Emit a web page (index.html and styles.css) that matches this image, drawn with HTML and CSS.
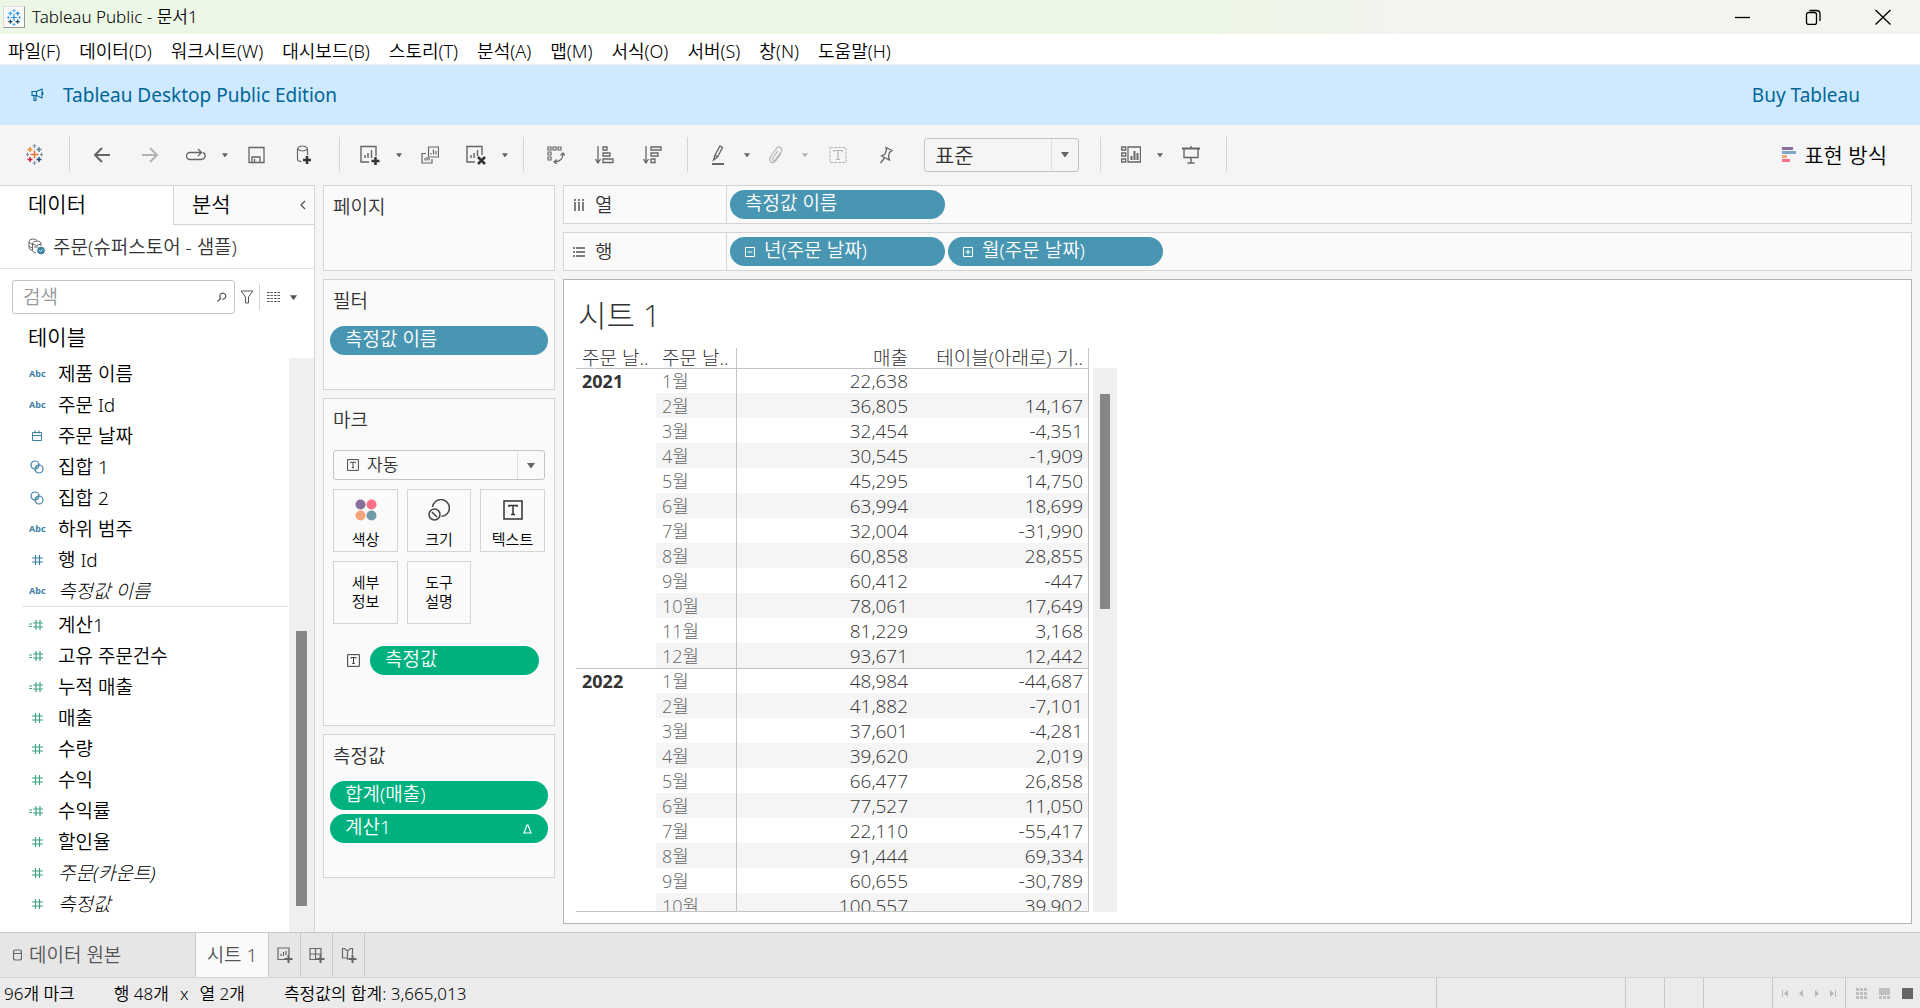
FILE: index.html
```html
<!DOCTYPE html>
<html lang="ko">
<head>
<meta charset="utf-8">
<title>Tableau Public - 문서1</title>
<link rel="stylesheet" href="styles.css">
</head>
<body>
<svg class="defs" aria-hidden="true">
  <symbol id="hash" viewBox="0 0 16 12"><path d="M6.500 1v10M10.500 1v10M3 4h11M3 8h11" fill="none" stroke="currentColor" stroke-width="1.200"/></symbol>
  <symbol id="calc" viewBox="0 0 16 12"><path d="M7 1v10M11 1v10M4 4h10M4 8h10M0 5h3M0 7.500h3" fill="none" stroke="currentColor" stroke-width="1.200"/></symbol>
  <symbol id="date" viewBox="0 0 12 12"><path d="M1.500 2.500h9v8h-9zM1.500 5.500h9M4 .5v3M8 .5v3" fill="none" stroke="currentColor"/></symbol>
  <symbol id="set" viewBox="0 0 14 14"><circle cx="5" cy="5" r="4" fill="none" stroke="currentColor" stroke-width="1.200"/><circle cx="9" cy="9" r="4" fill="none" stroke="currentColor" stroke-width="1.200"/><path d="M5 9a4 4 0 0 1 4-4a4 4 0 0 1-4 4z" fill="currentColor" opacity=".5"/></symbol>
  <symbol id="caret" viewBox="0 0 8 5"><path d="M0 0h8L4.500 5h-1z" fill="currentColor"/></symbol>
  <symbol id="textmark" viewBox="0 0 20 20"><path d="M1 1h18v18H1zM6 7V5.500h8V7M10 5.500v9M8 14.500h4" fill="none" stroke="currentColor" stroke-width="1.500"/></symbol>
  <symbol id="spark" viewBox="0 0 17 21">
    <path d="M8.500 6.500v8M4.500 10.500h8" class="c1"/><path d="M4 3v5M1.500 5.500h5" class="c2"/><path d="M13 3v5M10.500 5.500h5" class="c3"/><path d="M4 13v5M1.500 15.500h5" class="c4"/><path d="M13 13v5M10.500 15.500h5" class="c5"/><path d="M8.500 0v4M6.500 2h4M8.500 17v4M6.500 19h4M1.500 8.500v4M0 10.500h3M15.500 8.500v4M14 10.500h3" class="c6"/>
  </symbol>
</svg>

<div class="app">
  <header class="titlebar">
    <span class="app-icon"><svg class="mono" width="14" height="17" viewBox="0 0 17 21"><use href="#spark" width="17" height="21"/></svg></span>
    <h1 class="app-title">Tableau Public - 문서1</h1>
    <button class="win-btn" aria-label="최소화"><svg width="16" height="16"><path d="M0 8.500h15"/></svg></button>
    <button class="win-btn" aria-label="이전 크기로"><svg width="16" height="16"><path d="M3.500 3.500h6a2 2 0 0 1 2 2v8a2 2 0 0 1-2 2h-6a2 2 0 0 1-2-2v-8a2 2 0 0 1 2-2zM4.500 1.500h7q3.500 0 3.500 3.500v7"/></svg></button>
    <button class="win-btn" aria-label="닫기"><svg width="16" height="16"><path d="M.5 1l15 14.500M15.500 1l-15 14.500"/></svg></button>
  </header>

  <nav class="menubar" aria-label="메뉴">
    <button>파일(F)</button><button>데이터(D)</button><button>워크시트(W)</button><button>대시보드(B)</button><button>스토리(T)</button><button>분석(A)</button><button>맵(M)</button><button>서식(O)</button><button>서버(S)</button><button>창(N)</button><button>도움말(H)</button>
  </nav>

  <div class="banner">
    <svg width="14" height="14" viewBox="0 0 14 14"><path d="M1 3.500h4.500L11 1v9L5.500 7.500H1zM3 7.500v5h2v-5M5.500 3.500v4M11 4q2 1.500 0 3" fill="none" stroke="currentColor" stroke-width="1.100"/></svg>
    <span>Tableau Desktop Public Edition</span>
    <a href="#buy">Buy Tableau</a>
  </div>

  <div class="toolbar">
    <button class="tool logo" aria-label="시작 페이지"><svg width="17" height="21" viewBox="0 0 17 21"><use href="#spark" width="17" height="21"/></svg></button>
    <span class="sep"></span>
    <button class="tool" aria-label="실행 취소"><svg width="18" height="18"><path d="M17 9H2M9 2L2 9l7 7" stroke-width="2"/></svg></button>
    <button class="tool off" aria-label="다시 실행"><svg width="18" height="18"><path d="M1 9h15M9 2l7 7-7 7" stroke-width="2"/></svg></button>
    <button class="tool menu" aria-label="다시 재생"><svg width="20" height="14"><path d="M5 11.500H4a3 3 0 0 1 0-7h11M12 1l3.500 3.500L12 8M17 4.500q2.500 1 2 4t-4 3H5" stroke-width="1.400"/></svg></button>
    <button class="drop" aria-label="다시 재생 옵션"><svg width="6" height="4"><use href="#caret"/></svg></button>
    <button class="tool" aria-label="저장"><svg width="17" height="18"><path d="M1 1.500h15v15H1zM4 16v-5h8v5M6.500 13v3" stroke-width="1.300"/></svg></button>
    <button class="tool" aria-label="새 데이터 원본"><svg width="16" height="20"><path d="M1.500 4v10q0 2.500 4 2.500M11.500 4v6M1.500 4q5 4 10 0q-1-3-5-3t-5 3" stroke-width="1.200"/><path d="M11 11v8M7 15h8" class="plus"/></svg></button>
    <span class="sep"></span>
    <button class="tool menu" aria-label="새 워크시트"><svg width="20" height="20"><path d="M9 17H1V1.500h15V11M5 13v-3M8 13V8M11.500 13V5" stroke-width="1.400"/><path d="M15.500 12v8M11.500 16h8" class="plus"/></svg></button>
    <button class="drop" aria-label="새 워크시트 옵션"><svg width="6" height="4"><use href="#caret"/></svg></button>
    <button class="tool" aria-label="복제"><svg width="18" height="18"><path d="M7.500 1h10v10h-10zM10 8.500V7M12.500 8.500v-5M15 8.500V5M5 7.500H1V17h10v-4M4 14.500V12M6 14.500V11M8 14.500V12" stroke-width="1.200"/></svg></button>
    <button class="tool menu" aria-label="시트 지우기"><svg width="20" height="20"><path d="M9 17H1V1.500h15V10M5 13v-3M8 13V8M11.500 11V5" stroke-width="1.400"/><path d="M12 12l7 7M19 12l-7 7" class="plus"/></svg></button>
    <button class="drop" aria-label="시트 지우기 옵션"><svg width="6" height="4"><use href="#caret"/></svg></button>
    <span class="sep"></span>
    <button class="tool" aria-label="행과 열 바꾸기"><svg width="18" height="18"><path d="M1 1h3v3H1zM6 1h3v3H6zM11 1h3v3h-3zM1 6h3v3H1zM1 11h3v3H1zM16 8q0 7-8 8M13.500 9.500L16 7l2 2.500M10 13.500L7 16l3 2" stroke-width="1.200"/></svg></button>
    <button class="tool" aria-label="오름차순 정렬"><svg width="19" height="18"><path d="M3 0v16M.5 13L3 17l2.500-4M8 1h4v3H8zM8 7h7v3H8zM8 13h10v3.500H8z" stroke-width="1.300"/></svg></button>
    <button class="tool" aria-label="내림차순 정렬"><svg width="19" height="18"><path d="M3 0v16M.5 13L3 17l2.500-4M8 1h10v3H8zM8 7h7v3H8zM8 13h4v3.500H8z" stroke-width="1.300"/></svg></button>
    <span class="sep"></span>
    <button class="tool menu" aria-label="강조 표시"><svg width="14" height="20"><path d="M2.500 15l1.500-5 5-9 2.500 1.500-5 9.500zM4 10l2.500 2" stroke-width="1.300"/><path d="M1 19h12" stroke-width="2"/></svg></button>
    <button class="drop" aria-label="강조 표시 옵션"><svg width="6" height="4"><use href="#caret"/></svg></button>
    <button class="tool menu off" aria-label="그룹 구성원"><svg width="15" height="18"><path d="M9 5l-5 7q-1 2 .500 2.500T7 13l5-7q2-3-.5-4.500T7 3L2 10q-2.500 4 0 6t5-1.500l5-7" stroke-width="1.200"/></svg></button>
    <button class="drop off" aria-label="그룹 옵션"><svg width="6" height="4"><use href="#caret"/></svg></button>
    <button class="tool label off" aria-label="마크 레이블 표시"><svg width="18" height="18"><path d="M1 1.500h16v15H1z" stroke-dasharray="3 1"/><path d="M5 6V4.500h8V6M9 4.500v9M7 13.500h4" stroke-width="1.200"/></svg></button>
    <button class="tool pin" aria-label="축 고정"><svg width="14" height="18"><path d="M7 1.500l6 3-2.500 2-1 3.500 1 4-8-4L6 8l1.500-4zM5.500 12L1.500 17" stroke-width="1.300"/></svg></button>
    <span class="combo fit"><select aria-label="맞춤"><option>표준</option></select><svg width="8" height="5"><use href="#caret"/></svg></span>
    <span class="sep fit-sep"></span>
    <button class="tool menu" aria-label="카드 표시/숨기기"><svg width="20" height="17"><path d="M.7 1h4v3h-4zM.7 7h4v3h-4zM.7 13h4v3h-4zM7 1h12.500v15H7z" stroke-width="1.300"/><path d="M10.500 14v-4M13.500 14V5M16.500 14V7" stroke-width="2"/></svg></button>
    <button class="drop" aria-label="카드 옵션"><svg width="6" height="4"><use href="#caret"/></svg></button>
    <button class="tool" aria-label="프레젠테이션 모드"><svg width="18" height="18"><path d="M0 2.500h18" stroke-width="2"/><path d="M9 0v2M2 3v8.500h14V3M9 12v5M5.500 17h7" stroke-width="1.400"/></svg></button>
    <span class="sep"></span>
    <button class="showme"><svg width="14" height="15"><path d="M0 1.500h11" stroke="#86709a"/><path d="M0 5.500h14" stroke="#80a4d0"/><path d="M0 9.500h5" stroke="#f4a57a"/><path d="M0 13.500h8" stroke="#fb7084"/></svg>표현 방식</button>
  </div>

  <main class="work">
    <aside class="datapane">
      <div class="panetabs">
        <button class="ptab on">데이터</button>
        <button class="ptab">분석</button>
        <button class="fold" aria-label="창 축소"><svg width="6" height="10"><path d="M5 1L1 5l4 4" fill="none" stroke="#555" stroke-width="1.300"/></svg></button>
      </div>
      <button class="source"><svg width="17" height="17" viewBox="0 0 17 17"><path d="M5 12.500q-4-.5-4-2.500V3.500Q1 1 5 1q3 0 4 1.500M1 4q1 2 3 2M1 8q1 1.500 3 1.500M13 8V5Q12 3 9 3T4.500 5v7.500Q5 14.500 8 15M4.500 6q4 3 8.500 0M6 9h4" fill="none" stroke="#666"/><circle cx="13" cy="12.500" r="3.800" fill="#3d81a3"/><path d="M11.500 12.500l1 1 2-2" fill="none" stroke="#fff"/></svg>주문(슈퍼스토어 - 샘플)</button>
      <div class="searchrow">
        <label class="search"><input type="text" placeholder="검색" aria-label="필드 검색"><svg width="10" height="10"><path d="M4 6.500a3 3 0 1 1 1 .5M3.500 6.500L.5 9.500" fill="none" stroke="#555" stroke-width="1.200"/></svg></label>
        <button class="icon-btn" aria-label="필터"><svg width="14" height="14"><path d="M1 1h12L8.500 7v6h-3V7z" fill="none" stroke="#555"/></svg></button>
        <button class="icon-btn view" aria-label="보기"><svg width="13" height="10"><path d="M0 .5h13M0 3.500h13M0 6.500h13M0 9.500h13" stroke="#555" stroke-dasharray="2.500 1"/></svg><svg width="7" height="5"><use href="#caret"/></svg></button>
      </div>
      <h2 class="tables">테이블</h2>
      <div class="fieldarea">
        <div class="fields">
          <ul class="dims">
            <li><b>Abc</b>제품 이름</li>
            <li><b>Abc</b>주문 Id</li>
            <li><svg width="16" height="12"><use href="#date"/></svg>주문 날짜</li>
            <li><svg width="16" height="14"><use href="#set"/></svg>집합 1</li>
            <li><svg width="16" height="14"><use href="#set"/></svg>집합 2</li>
            <li><b>Abc</b>하위 범주</li>
            <li><svg width="16" height="12"><use href="#hash"/></svg>행 Id</li>
            <li class="gen"><b>Abc</b>측정값 이름</li>
          </ul>
          <ul class="meas">
            <li><svg width="16" height="12"><use href="#calc"/></svg>계산1</li>
            <li><svg width="16" height="12"><use href="#calc"/></svg>고유 주문건수</li>
            <li><svg width="16" height="12"><use href="#calc"/></svg>누적 매출</li>
            <li><svg width="16" height="12"><use href="#hash"/></svg>매출</li>
            <li><svg width="16" height="12"><use href="#hash"/></svg>수량</li>
            <li><svg width="16" height="12"><use href="#hash"/></svg>수익</li>
            <li><svg width="16" height="12"><use href="#calc"/></svg>수익률</li>
            <li><svg width="16" height="12"><use href="#hash"/></svg>할인율</li>
            <li class="gen"><svg width="16" height="12"><use href="#hash"/></svg>주문(카운트)</li>
            <li class="gen"><svg width="16" height="12"><use href="#hash"/></svg>측정값</li>
          </ul>
        </div>
        <div class="track field-track"><div class="thumb"></div></div>
      </div>
    </aside>

    <section class="cards">
      <div class="card pages"><h2>페이지</h2></div>
      <div class="card filters"><h2>필터</h2><button class="pill blue">측정값 이름</button></div>
      <div class="card marks">
        <h2>마크</h2>
        <span class="combo marktype"><svg class="lead" width="12" height="12"><use href="#textmark"/></svg><select aria-label="마크 유형"><option>자동</option></select><svg width="8" height="5"><use href="#caret"/></svg></span>
        <div class="markgrid">
          <button><svg width="22" height="22"><circle cx="5.500" cy="5.500" r="5" fill="#86709a"/><circle cx="16.500" cy="5.500" r="5" fill="#fb7084"/><circle cx="5.500" cy="16.500" r="5" fill="#f4a57a"/><circle cx="16.500" cy="16.500" r="5" fill="#6f9aa8"/></svg>색상</button>
          <button><svg width="22" height="22"><path d="M4.500 8a8.500 8.500 0 1 1 9 9.500" /><circle cx="6.500" cy="15.500" r="5.500"/><path d="M4 13l5 5"/></svg>크기</button>
          <button><svg width="20" height="22"><use href="#textmark"/></svg>텍스트</button>
          <button>세부<br>정보</button>
          <button>도구<br>설명</button>
        </div>
        <div class="encoding"><svg width="13" height="13"><use href="#textmark"/></svg><button class="pill green">측정값</button></div>
      </div>
      <div class="card values"><h2>측정값</h2><button class="pill green">합계(매출)</button><button class="pill green">계산1<svg width="9" height="10"><path d="M4 1h1l3 8H1z" fill="none" stroke="#fff" stroke-width="1.200"/></svg></button></div>
    </section>

    <section class="sheet">
      <div class="shelf">
        <h2><svg width="12" height="12"><path d="M2 0v2M6 0v2M10 0v2M2 3v9M6 3v9M10 3v9" stroke="#555" stroke-width="1.500"/></svg>열</h2>
        <button class="pill blue">측정값 이름</button>
      </div>
      <div class="shelf">
        <h2><svg width="12" height="12"><path d="M0 2h2M0 6h2M0 10h2M3 2h9M3 6h9M3 10h9" stroke="#555" stroke-width="1.500"/></svg>행</h2>
        <button class="pill blue"><svg width="10" height="10"><path d="M.5.5h9v9h-9zM2.500 5h5" fill="none" stroke="#fff"/></svg>년(주문 날짜)</button>
        <button class="pill blue"><svg width="10" height="10"><path d="M.5.5h9v9h-9zM2.500 5h5M5 2.500v5" fill="none" stroke="#fff"/></svg>월(주문 날짜)</button>
      </div>
      <div class="canvas">
        <h2>시트 1</h2>
        <div class="viz">
          <div class="tablewrap">
          <table>
            <colgroup><col class="cy"><col class="cm"><col><col></colgroup>
            <thead><tr><th>주문 날..</th><th>주문 날..</th><th class="num">매출</th><th class="num">테이블(아래로) 기..</th></tr></thead>
            <tbody>
              <tr><th rowspan="12">2021</th><th>1월</th><td>22,638</td><td></td></tr>
              <tr><th>2월</th><td>36,805</td><td>14,167</td></tr>
              <tr><th>3월</th><td>32,454</td><td>-4,351</td></tr>
              <tr><th>4월</th><td>30,545</td><td>-1,909</td></tr>
              <tr><th>5월</th><td>45,295</td><td>14,750</td></tr>
              <tr><th>6월</th><td>63,994</td><td>18,699</td></tr>
              <tr><th>7월</th><td>32,004</td><td>-31,990</td></tr>
              <tr><th>8월</th><td>60,858</td><td>28,855</td></tr>
              <tr><th>9월</th><td>60,412</td><td>-447</td></tr>
              <tr><th>10월</th><td>78,061</td><td>17,649</td></tr>
              <tr><th>11월</th><td>81,229</td><td>3,168</td></tr>
              <tr><th>12월</th><td>93,671</td><td>12,442</td></tr>
            </tbody>
            <tbody>
              <tr><th rowspan="10">2022</th><th>1월</th><td>48,984</td><td>-44,687</td></tr>
              <tr><th>2월</th><td>41,882</td><td>-7,101</td></tr>
              <tr><th>3월</th><td>37,601</td><td>-4,281</td></tr>
              <tr><th>4월</th><td>39,620</td><td>2,019</td></tr>
              <tr><th>5월</th><td>66,477</td><td>26,858</td></tr>
              <tr><th>6월</th><td>77,527</td><td>11,050</td></tr>
              <tr><th>7월</th><td>22,110</td><td>-55,417</td></tr>
              <tr><th>8월</th><td>91,444</td><td>69,334</td></tr>
              <tr><th>9월</th><td>60,655</td><td>-30,789</td></tr>
              <tr><th>10월</th><td>100,557</td><td>39,902</td></tr>
            </tbody>
          </table>
          </div>
          <div class="track viz-track"><div class="thumb"></div></div>
        </div>
      </div>
    </section>
  </main>

  <nav class="sheettabs" aria-label="시트">
    <button class="src"><svg width="9" height="12"><path d="M.5 3v6q0 2 2 2h4q2 0 2-2V3q0-2-2-2h-4q-2 0-2 2t2 1.500h4q2 0 2-1.500"/></svg>데이터 원본</button>
    <button class="on">시트 1</button>
    <button class="add" aria-label="새 워크시트"><svg width="16" height="16"><path d="M8 12.500H1V1h11v7M4 9V7M6.500 9V5M9 8V4"/><path d="M11.500 8v8M7.500 12h8" stroke-width="2"/></svg></button>
    <button class="add" aria-label="새 대시보드"><svg width="16" height="16"><path d="M8 12.500H1V1.500h11v7M1 7h11M6.500 1v11"/><path d="M11.500 8v8M7.500 12h8" stroke-width="2"/></svg></button>
    <button class="add" aria-label="새 스토리"><svg width="16" height="16"><path d="M7 12.500L5.500 11H1.500V1.500h2L6.500 4l3-2.500h2v6M6.500 4v7"/><path d="M11.500 8v8M7.500 12h8" stroke-width="2"/></svg></button>
  </nav>

  <footer class="status">
    <p><span>96개 마크</span><span>행 48개</span><span>x</span><span>열 2개</span><span>측정값의 합계: 3,665,013</span></p>
    <i class="w189"></i><i class="w39"></i><i class="w39"></i><i class="w69"></i>
    <div class="nav">
      <button aria-label="처음"><svg width="7" height="7"><path d="M0 0h1v7H0zM6 0v7L2 3.500z"/></svg></button><button aria-label="이전"><svg width="7" height="7"><path d="M5 0v7L1 3.500z"/></svg></button><button aria-label="다음"><svg width="7" height="7"><path d="M2 0v7l4-3.500z"/></svg></button><button aria-label="마지막"><svg width="7" height="7"><path d="M1 0v7l4-3.500zM6 0h1v7H6z"/></svg></button>
    </div>
    <div class="views">
      <button aria-label="시트 정렬기"><svg width="11" height="11"><path d="M0 0h3v3H0zM4 0h3v3H4zM8 0h3v3H8zM0 4h3v3H0zM4 4h3v3H4zM8 4h3v3H8zM0 8h3v3H0zM4 8h3v3H4zM8 8h3v3H8z"/></svg></button><button aria-label="필름 보기"><svg width="11" height="11"><path d="M0 0h11v7H0zM0 8h3v3H0zM4 8h3v3H4zM8 8h3v3H8z"/></svg></button><button class="on" aria-label="탭 표시"><svg width="11" height="11"><path d="M0 0h11v11H0z"/></svg></button>
    </div>
  </footer>
</div>
</body>
</html>
```

FILE: styles.css
```css
* { box-sizing: border-box; }

body, h1, h2, p, ul { margin: 0; padding: 0; }

body {
  font-family: "Noto Sans", "Noto Sans CJK KR", sans-serif;
  font-size: 19px;
  line-height: 24px;
  font-weight: 350;
  color: #000;
  background: #f5f5f5;
}

h1, h2 { font-size: inherit; font-weight: inherit; }
ul { list-style: none; }
svg { flex: none; display: block; }
.defs { display: none; }

button, input, select {
  font: inherit;
  color: inherit;
  background: none;
  border: 0;
  padding: 0;
  margin: 0;
  border-radius: 0;
  white-space: nowrap;
}

.app { display: flex; flex-direction: column; height: 100vh; min-width: 1300px; }

/* title bar */
.titlebar {
  display: flex;
  align-items: center;
  flex: none;
  height: 34px;
  padding: 0 2px 0 3px;
  background: linear-gradient(90deg, #ecf7e5 62%, #f3f4ef 74%);
}
.app-icon {
  display: grid;
  place-items: center;
  width: 22px;
  height: 22px;
  background: #f8f8f8;
  border: 1px solid #ddd;
  border-right-color: #999;
  border-bottom-color: #999;
}
.app-title { flex: 1; padding-left: 7px; font-size: 17px; }
.win-btn { display: grid; place-items: center; width: 70px; height: 32px; }
.win-btn svg { fill: none; stroke: #000; stroke-width: 1.3; }

#spark path { fill: none; stroke-width: 1.5; }
#spark .c1 { stroke: #e8762d; }
#spark .c2 { stroke: #eb9129; }
#spark .c3 { stroke: #59879b; }
#spark .c4 { stroke: #c72037; }
#spark .c5 { stroke: #1f447e; }
#spark .c6 { stroke: #7b8fa8; stroke-width: 1; }
.mono { filter: grayscale(1) brightness(.8) sepia(1) hue-rotate(165deg) saturate(4); }

/* menu bar */
.menubar {
  display: flex;
  flex: none;
  align-items: center;
  gap: 19px;
  height: 31px;
  padding: 3px 0 0 8px;
  font-size: 18px;
  background: #fff;
  border-bottom: 1px solid #eee;
}

/* banner */
.banner {
  display: flex;
  flex: none;
  align-items: center;
  gap: 18px;
  height: 60px;
  padding: 0 60px 0 31px;
  font-weight: 400;
  color: #006699;
  background: #cfe9ff;
}
.banner a { margin-left: auto; color: inherit; text-decoration: none; }

/* toolbar */
.toolbar { display: flex; flex: none; align-items: center; height: 60px; padding: 0 33px 1px 16px; }
.tool, .drop { display: grid; place-items: center; height: 36px; width: 48px; color: #666; }
.tool.menu { width: 44px; }
.tool.label { width: 52px; }
.tool.pin { width: 44px; }
.tool.logo { width: 36px; margin-right: 6px; }
.drop { width: 14px; }
.drop.off, .tool.off { color: #b4b4b4; }
.tool svg { fill: none; stroke: currentColor; }
.tool .plus { stroke: #333; stroke-width: 2.5; }
.sep { width: 1px; height: 35px; margin: 0 8px 0 11px; background: #d4d4d4; }
.fit-sep { margin-left: 21px; }

.combo { display: flex; position: relative; align-items: center; border: 1px solid #c4c4c4; border-radius: 3px; color: #333; }
.combo select { appearance: none; flex: 1; align-self: stretch; }
.combo svg:last-child { position: absolute; right: 9px; color: #666; pointer-events: none; }
.combo::after { content: ""; position: absolute; top: 0; bottom: 0; right: 26px; width: 1px; background: #e0e0e0; }
.fit { width: 155px; height: 34px; margin-left: 16px; font-size: 21px; }
.fit select { padding-left: 10px; }
.showme { display: flex; align-items: center; gap: 8px; margin-left: auto; font-size: 21px; }
.showme path { stroke-width: 3; }

/* workspace columns */
.work { display: flex; flex: 1; min-height: 0; }

.datapane {
  display: flex;
  flex-direction: column;
  flex: none;
  width: 315px;
  background: #fff;
  border-top: 1px solid #d4d4d4;
  border-right: 1px solid #d4d4d4;
}
.panetabs { display: flex; flex: none; height: 39px; font-size: 21px; }
.ptab { flex: 1; padding: 0 0 3px 18px; text-align: left; background: #fafafa; border-bottom: 1px solid #d4d4d4; }
.ptab.on { flex: none; width: 174px; padding-left: 28px; background: #fff; border-right: 1px solid #d4d4d4; border-bottom: 0; }
.fold { display: grid; place-items: center; width: 23px; background: #fafafa; border-bottom: 1px solid #d4d4d4; }
.source { display: flex; flex: none; align-items: center; gap: 8px; height: 44px; padding: 0 28px; color: #333; border-bottom: 1px solid #e2e2e2; }
.searchrow { display: flex; flex: none; align-items: center; height: 34px; margin: 11px 12px 0; }
.search { display: flex; align-items: center; width: 223px; height: 34px; padding: 0 7px 0 10px; border: 1px solid #c4c4c4; border-radius: 3px; }
.search input { flex: 1; min-width: 0; outline: 0; }
.search input::placeholder { color: #999; opacity: 1; }
.icon-btn { display: flex; align-items: center; justify-content: center; width: 25px; height: 26px; color: #555; }
.icon-btn.view { gap: 10px; width: 46px; padding-left: 2px; border-left: 1px solid #d4d4d4; }
.tables { flex: none; height: 44px; padding: 11px 0 0 28px; font-size: 21px; }
.fieldarea { display: flex; flex: 1; min-height: 0; }
.fields { flex: 1; overflow: hidden; }
.fields li { display: flex; align-items: center; gap: 12px; height: 31px; padding-left: 29px; }
.fields b { flex: none; width: 17px; font-size: 9px; font-weight: 700; font-style: normal; }
.fields b, .dims svg { color: #3d81a3; }
.fields li:has(svg) { gap: 13px; }
.fields .gen { font-style: italic; font-weight: 300; }
.dims { padding-bottom: 1px; }
.meas { padding-top: 1px; }
.dims::after { content: ""; display: block; height: 1px; margin: 0 1px 0 22px; background: #ddd; }
.meas svg { color: #3ea482; }

.track { flex: none; background: #efefef; }
.thumb { background: #868686; }
.field-track { width: 25px; padding: 273px 7px 26px; }
.field-track .thumb { height: 100%; }

/* cards */
.cards { display: flex; flex-direction: column; flex: none; gap: 8px; width: 232px; margin-left: 8px; }
.card { display: flex; flex-direction: column; flex: none; padding: 8px 6px; background: #fafafa; border: 1px solid #d4d4d4; }
.card h2 { height: 38px; padding-left: 3px; color: #333; line-height: 27px; }
.pages { height: 86px; }
.filters { height: 111px; }
.marks { height: 328px; }
.values { height: 144px; gap: 4px; }
.values h2 { height: 34px; }

.pill { display: flex; flex: none; align-items: center; gap: 9px; height: 29px; padding: 0 16px 4px 15px; border-radius: 15px; color: #fff; }
.blue { background: #4996b2; }
.green { background: #00b180; }
.pill svg { margin-top: 4px; }
.values .pill svg { margin-left: auto; }

.marktype { height: 30px; margin: 5px 3px 9px; font-size: 17px; }
.marktype .lead { margin: 0 8px 0 13px; }
.markgrid { display: grid; grid-template-columns: 65px 64px 65px; grid-auto-rows: 63px; gap: 9px; margin: 0 3px; color: #333; }
.markgrid button { display: flex; flex-direction: column; align-items: center; justify-content: center; gap: 9px; padding-top: 7px; border: 1px solid #d4d4d4; font-size: 15px; line-height: 19px; color: #000; }
.markgrid button:has(br) { display: block; padding: 0 0 2px; }
.markgrid button svg { color: #333; }
.markgrid button path { fill: none; stroke: #444; stroke-width: 1.5; }
.markgrid button circle:not([fill]) { fill: none; stroke: #444; stroke-width: 1.5; }
.encoding { display: flex; align-items: center; gap: 10px; margin: 22px 9px 0 17px; color: #333; }
.encoding .pill { flex: 1; }

/* shelves and view */
.sheet { display: flex; flex-direction: column; flex: 1; gap: 8px; min-width: 0; margin: 0 8px; }
.shelf { display: flex; flex: none; align-items: center; gap: 3px; height: 39px; background: #fafafa; border: 1px solid #d4d4d4; }
.shelf h2 { display: flex; align-items: center; gap: 10px; align-self: stretch; width: 163px; padding-left: 9px; border-right: 1px solid #d4d4d4; color: #333; }
.shelf .pill { width: 215px; }
.canvas { display: flex; flex-direction: column; flex: 1; min-height: 0; margin-bottom: 8px; padding: 0 12px 11px; background: #fff; border: 1px solid #b4b4b4; font-family: "Open Sans", "Noto Sans CJK KR", sans-serif; }
.canvas h2 { flex: none; height: 64px; padding-left: 2px; font-size: 31px; line-height: 70px; font-weight: 300; color: #333; }
.viz { display: flex; flex: 1; gap: 4px; min-height: 0; }
.tablewrap { overflow: hidden; padding-top: 4px; border-bottom: 1px solid #c4c4c4; }
table { width: 513px; table-layout: fixed; border-spacing: 0; font-size: 19px; line-height: 20px; color: #333; }
.cy { width: 80px; }
.cm { width: 81px; }
th, td { padding: 0 5px; font-weight: 300; text-align: left; white-space: nowrap; }
thead th { height: 20px; font-size: 19px; }
tbody th, tbody td { height: 25px; }
td, th.num { text-align: right; }
tbody th { font-size: 18px; color: #666; }
tbody th[rowspan] { padding: 2px 6px; font-weight: 700; color: #333; vertical-align: top; }
thead th:first-child { padding-left: 6px; }
thead th:nth-child(2), tbody th:not([rowspan]) { padding-left: 6px; padding-right: 0; border-right: 1px solid #c4c4c4; }
thead th:last-child, td:last-child { border-right: 1px solid #c4c4c4; }
tbody tr:first-child > * { border-top: 1px solid #c4c4c4; }
tbody tr:nth-child(even) > * { background: #f5f5f5; }
.viz-track { width: 24px; margin-top: 24px; padding: 26px 7px 0; }
.viz-track .thumb { height: 215px; }

/* bottom tabs */
.sheettabs { display: flex; flex: none; height: 45px; background: #e6e6e6; border-top: 1px solid #c8c8c8; color: #555; }
.sheettabs button { display: flex; align-items: center; justify-content: center; border-right: 1px solid #c8c8c8; }
.sheettabs .src { justify-content: flex-start; gap: 7px; width: 196px; padding-left: 13px; }
.sheettabs .on { width: 73px; background: #fafafa; }
.sheettabs .add { width: 32px; }
.sheettabs svg { fill: none; stroke: #666; stroke-width: 1.2; }

/* status bar */
.status { display: flex; flex: none; height: 31px; background: #ebebeb; border-top: 1px solid #d4d4d4; font-size: 17px; line-height: 32px; }
.status p { display: flex; flex: 1; padding-left: 4px; }
.status span { margin-right: 11px; }
.status span:first-child, .status span:nth-child(4) { margin-right: 39px; }
.status i, .nav, .views { border-left: 1px solid #c8c8c8; }
.w189 { width: 189px; }
.w39 { width: 39px; }
.w69 { width: 69px; }
.nav, .views { display: flex; align-items: center; justify-content: space-between; }
.nav { width: 73px; padding: 0 9px; fill: #b8b8b8; }
.views { width: 75px; padding: 0 7px 0 10px; fill: #c0c0c0; }
.views .on { fill: #666; }
```
